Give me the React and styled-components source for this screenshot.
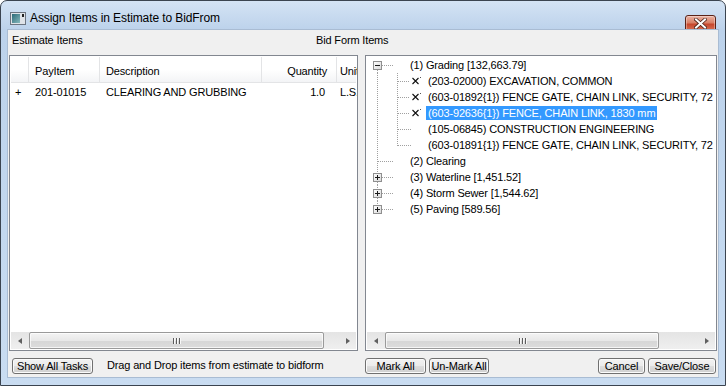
import React from "react";
import styled, { createGlobalStyle } from "styled-components";

const GlobalStyle = createGlobalStyle`
  html, body { margin: 0; padding: 0; background: #fff; }
  body { font-family: "Liberation Sans", Arial, sans-serif; font-size: 11px; letter-spacing: -0.15px; color: #000; }
  * { box-sizing: border-box; }
`;

const treeRows = [
	{ level: 0, expander: "minus", first: true, text: "(1) Grading [132,663.79]" },
	{ level: 1, check: true, text: "(203-02000) EXCAVATION, COMMON" },
	{ level: 1, check: true, text: "(603-01892{1}) FENCE GATE, CHAIN LINK, SECURITY, 72" },
	{ level: 1, check: true, selected: true, text: "(603-92636{1}) FENCE, CHAIN LINK, 1830 mm" },
	{ level: 1, text: "(105-06845) CONSTRUCTION ENGINEERING" },
	{ level: 1, last: true, text: "(603-01891{1}) FENCE GATE, CHAIN LINK, SECURITY, 72" },
	{ level: 0, text: "(2) Clearing" },
	{ level: 0, expander: "plus", text: "(3) Waterline [1,451.52]" },
	{ level: 0, expander: "plus", text: "(4) Storm Sewer [1,544.62]" },
	{ level: 0, expander: "plus", last: true, text: "(5) Paving [589.56]" },
];

const columns = [
	{ key: "head", title: "", width: 18 },
	{ key: "pay", title: "PayItem", width: 71 },
	{ key: "desc", title: "Description", width: 162 },
	{ key: "qty", title: "Quantity", width: 75, right: true },
	{ key: "unit", title: "Unit", width: 60 },
];

const estimateRows = [
	{ head: "+", pay: "201-01015", desc: "CLEARING AND GRUBBING", qty: "1.0", unit: "L.S." },
];

function AppIcon() {
	return (
		<svg width="16" height="14" viewBox="0 0 16 14">
			<defs>
				<linearGradient id="ico" x1="0" y1="0" x2="1" y2="1">
					<stop offset="0" stopColor="#2d6a78" />
					<stop offset="1" stopColor="#86b9bd" />
				</linearGradient>
			</defs>
			<rect x="0.5" y="1.5" width="15" height="12" fill="#dfe3e8" stroke="#6c7480" />
			<rect x="2" y="3" width="8" height="9" fill="url(#ico)" />
			<rect x="12" y="3" width="2" height="3" fill="#222" />
		</svg>
	);
}

function CloseGlyph() {
	return (
		<svg width="13" height="11" viewBox="0 0 13 11">
			<path d="M2 1.5 L11 9.5 M11 1.5 L2 9.5" stroke="#4a2219" strokeWidth="3.6" strokeLinecap="square" />
			<path d="M2 1.5 L11 9.5 M11 1.5 L2 9.5" stroke="#fff" strokeWidth="2" strokeLinecap="square" />
		</svg>
	);
}

function TreeLines({ level, expander, check, first, last }) {
	const w = level === 0 ? 41 : 59;
	const dot = { stroke: "#a0a0a0", strokeDasharray: "1 1", shapeRendering: "crispEdges" };
	const lines = [];
	if (level === 0) {
		const top = first ? 8 : 0;
		const bottom = last ? 9 : 16;
		if (expander) {
			if (!first) lines.push(<path key="u" d={`M10.5 0 V4`} {...dot} />);
			if (!last) lines.push(<path key="d" d={`M10.5 13 V16`} {...dot} />);
			lines.push(<path key="h" d="M15 8.5 H27" {...dot} />);
		} else {
			lines.push(<path key="v" d={`M10.5 ${top} V${bottom}`} {...dot} />);
			lines.push(<path key="h" d="M11 8.5 H27" {...dot} />);
		}
	} else {
		lines.push(<path key="r" d="M10.5 0 V16" {...dot} />);
		lines.push(<path key="c" d={`M30.5 0 V${last ? 9 : 16}`} {...dot} />);
		lines.push(<path key="h" d={check ? "M31 8.5 H43" : "M31 8.5 H45"} {...dot} />);
	}
	return (
		<svg width={w} height="16" viewBox={`0 0 ${w} 16`} style={{ flex: "none" }}>
			<defs>
				<linearGradient id="exp" x1="0" y1="0" x2="1" y2="1">
					<stop offset="0" stopColor="#ffffff" />
					<stop offset="1" stopColor="#d8d8d8" />
				</linearGradient>
			</defs>
			{lines}
			{expander && (
				<g shapeRendering="crispEdges">
					<rect x="6.5" y="4.5" width="8" height="8" fill="url(#exp)" stroke="#8f8f8f" />
					<path d="M8 8.5 H13" stroke="#1a1a1a" />
					{expander === "plus" && <path d="M10.5 6 V11" stroke="#1a1a1a" />}
				</g>
			)}
			{check && (
				<g>
					<path d="M45.5 5 L51.5 11 M51.5 5 L45.5 11" stroke="#111" strokeWidth="1.1" />
					<rect x="53" y="4" width="1" height="1" fill="#555" />
				</g>
			)}
		</svg>
	);
}

export default function App() {
	return (
		<>
			<GlobalStyle />
			<Window>
				<TitleBar>
					<AppIcon />
					<Title>Assign Items in Estimate to BidFrom</Title>
					<CloseButton>
						<CloseGlyph />
					</CloseButton>
				</TitleBar>

				<Client>
					<LabelRow>
						<Label width={307}>Estimate Items</Label>
						<Label>Bid Form Items</Label>
					</LabelRow>

					<Panel>
						<GridHeader>
							{columns.map((c) => (
								<HeaderCell key={c.key} width={c.width} right={c.right}>
									{c.title}
								</HeaderCell>
							))}
						</GridHeader>
						{estimateRows.map((r) => (
							<GridRow key={r.pay}>
								{columns.map((c) => (
									<Cell key={c.key} width={c.width} right={c.right}>
										{r[c.key]}
									</Cell>
								))}
							</GridRow>
						))}
						<Filler />
						<ScrollBar thumb={295} />
					</Panel>

					<Panel>
						<Tree>
							{treeRows.map((r, i) => (
								<TreeRow key={i}>
									<TreeLines {...r} />
									<NodeText selected={r.selected}>{r.text}</NodeText>
								</TreeRow>
							))}
						</Tree>
						<ScrollBar thumb={274} />
					</Panel>

					<LeftActions>
						<Button width={81}>Show All Tasks</Button>
						<Hint>Drag and Drop items from estimate to bidform</Hint>
					</LeftActions>

					<RightActions>
						<Button width={61}>Mark All</Button>
						<Button width={60}>Un-Mark All</Button>
						<Spacer />
						<Button width={47}>Cancel</Button>
						<Button width={68}>Save/Close</Button>
					</RightActions>
				</Client>
			</Window>
		</>
	);
}

function ScrollBar({ thumb }) {
	return (
		<Bar>
			<Arrow>
				<LeftTri />
			</Arrow>
			<Track>
				<Thumb style={{ width: thumb }}>
					<Grip />
					<Grip />
					<Grip />
				</Thumb>
			</Track>
			<Arrow>
				<RightTri />
			</Arrow>
		</Bar>
	);
}

const Window = styled.div`
	width: 726px;
	height: 386px;
	display: flex;
	flex-direction: column;
	padding: 0 7px 8px;
	border: 1px solid #3b4450;
	border-radius: 7px 7px 0 0;
	background: linear-gradient(to bottom, #d4e3f4 0px, #bcd2eb 29px, #c3d8ef 60%, #c9dcf1 100%);
`;

const TitleBar = styled.div`
	height: 29px;
	flex: none;
	display: flex;
	align-items: center;
	padding: 5px 0 0 2px;
	gap: 4px;
`;

const Title = styled.div`
	font-size: 12px;
	letter-spacing: -0.1px;
	color: #000;
`;

const CloseButton = styled.div`
	margin-left: auto;
	margin-right: 2px;
	align-self: flex-start;
	margin-top: 9px;
	width: 31px;
	height: 17px;
	display: flex;
	align-items: center;
	justify-content: center;
	border: 1px solid #5b2217;
	border-radius: 3px;
	background: linear-gradient(to bottom, #eab2a4 0%, #d98066 45%, #c7472d 55%, #d7765a 100%);
	box-shadow: inset 0 0 0 1px rgba(255, 255, 255, 0.35);
`;

const Client = styled.div`
	flex: 1;
	display: grid;
	grid-template-columns: 349px 352px;
	grid-template-rows: 25px 296px 1fr;
	column-gap: 7px;
	padding: 0 1px;
	background: #f0f0f0;
	box-shadow: 0 0 0 1px #a9bcd3;
`;

const LabelRow = styled.div`
	grid-column: 1 / -1;
	display: flex;
	padding: 4px 0 0 3px;
	line-height: 13px;
`;

const Label = styled.div`
	width: ${(p) => (p.width ? `${p.width - 3}px` : "auto")};
`;

const Panel = styled.div`
	display: flex;
	flex-direction: column;
	overflow: hidden;
	background: #fff;
	border: 1px solid #828790;
	padding: 1px;
`;

const GridHeader = styled.div`
	display: flex;
	height: 26px;
	flex: none;
	background: linear-gradient(to bottom, #ffffff 0%, #ffffff 50%, #f3f4f6 100%);
	border-bottom: 1px solid #e3e4e6;
`;

const HeaderCell = styled.div`
	flex: none;
	width: ${(p) => p.width}px;
	display: flex;
	align-items: center;
	justify-content: ${(p) => (p.right ? "flex-end" : "flex-start")};
	padding: ${(p) => (p.right ? "3px 9px 0 0" : "3px 0 0 6px")};
	border-right: 1px solid #e3e4e6;
	white-space: nowrap;
	overflow: hidden;
	&:last-child {
		padding-left: 3px;
	}
`;

const GridRow = styled.div`
	display: flex;
	height: 17px;
	flex: none;
`;

const Cell = styled.div`
	flex: none;
	width: ${(p) => p.width}px;
	display: flex;
	align-items: center;
	justify-content: ${(p) => (p.right ? "flex-end" : "flex-start")};
	padding: ${(p) => (p.right ? "0 12px 0 0" : "0 0 0 6px")};
	white-space: nowrap;
	overflow: hidden;
	&:first-child {
		padding-left: 4px;
	}
	&:last-child {
		padding-left: 3px;
	}
`;

const Filler = styled.div`
	flex: 1;
`;

const Tree = styled.div`
	flex: 1;
	overflow: hidden;
`;

const TreeRow = styled.div`
	display: flex;
	align-items: center;
	height: 16px;
	white-space: nowrap;
`;

const NodeText = styled.span`
	height: 14px;
	line-height: 14px;
	padding: 0 2px;
	background: ${(p) => (p.selected ? "#3399ff" : "transparent")};
	color: ${(p) => (p.selected ? "#fff" : "#000")};
`;

const Bar = styled.div`
	flex: none;
	height: 17px;
	display: flex;
	background: linear-gradient(to bottom, #e4e4e4 0%, #efefef 100%);
`;

const Arrow = styled.div`
	width: 17px;
	flex: none;
	display: flex;
	align-items: center;
	justify-content: center;
`;

const LeftTri = styled.div`
	width: 0;
	height: 0;
	border-top: 3.5px solid transparent;
	border-bottom: 3.5px solid transparent;
	border-right: 4px solid #606060;
`;

const RightTri = styled.div`
	width: 0;
	height: 0;
	border-top: 3.5px solid transparent;
	border-bottom: 3.5px solid transparent;
	border-left: 4px solid #606060;
`;

const Track = styled.div`
	flex: 1;
	display: flex;
	align-items: stretch;
	padding: 0 0 0 1px;
`;

const Thumb = styled.div`
	display: flex;
	align-items: center;
	justify-content: center;
	gap: 2px;
	border: 1px solid #9a9a9a;
	border-radius: 2px;
	background: linear-gradient(to bottom, #f4f4f4 0%, #e8e8e8 50%, #d6d6d6 51%, #dcdcdc 100%);
	box-shadow: inset 0 0 0 1px rgba(255, 255, 255, 0.7);
`;

const Grip = styled.div`
	width: 1px;
	height: 6px;
	background: #5c5c5c;
	box-shadow: 1px 0 0 #f8f8f8;
`;

const LeftActions = styled.div`
	display: flex;
	align-items: flex-start;
	padding: 7px 0 0 3px;
`;

const RightActions = styled.div`
	display: flex;
	align-items: flex-start;
	gap: 3px;
	padding: 7px 1px 0 0;
`;

const Spacer = styled.div`
	flex: 1;
`;

const Hint = styled.div`
	margin-left: 14px;
	line-height: 14px;
`;

const Button = styled.div`
	width: ${(p) => p.width}px;
	height: 16px;
	flex: none;
	display: flex;
	align-items: center;
	justify-content: center;
	border: 1px solid #707070;
	border-radius: 3px;
	background: linear-gradient(to bottom, #f2f2f2 0%, #ebebeb 50%, #dddddd 51%, #cfcfcf 100%);
	box-shadow: inset 0 0 0 1px #fbfbfb;
	white-space: nowrap;
	line-height: 13px;
`;
